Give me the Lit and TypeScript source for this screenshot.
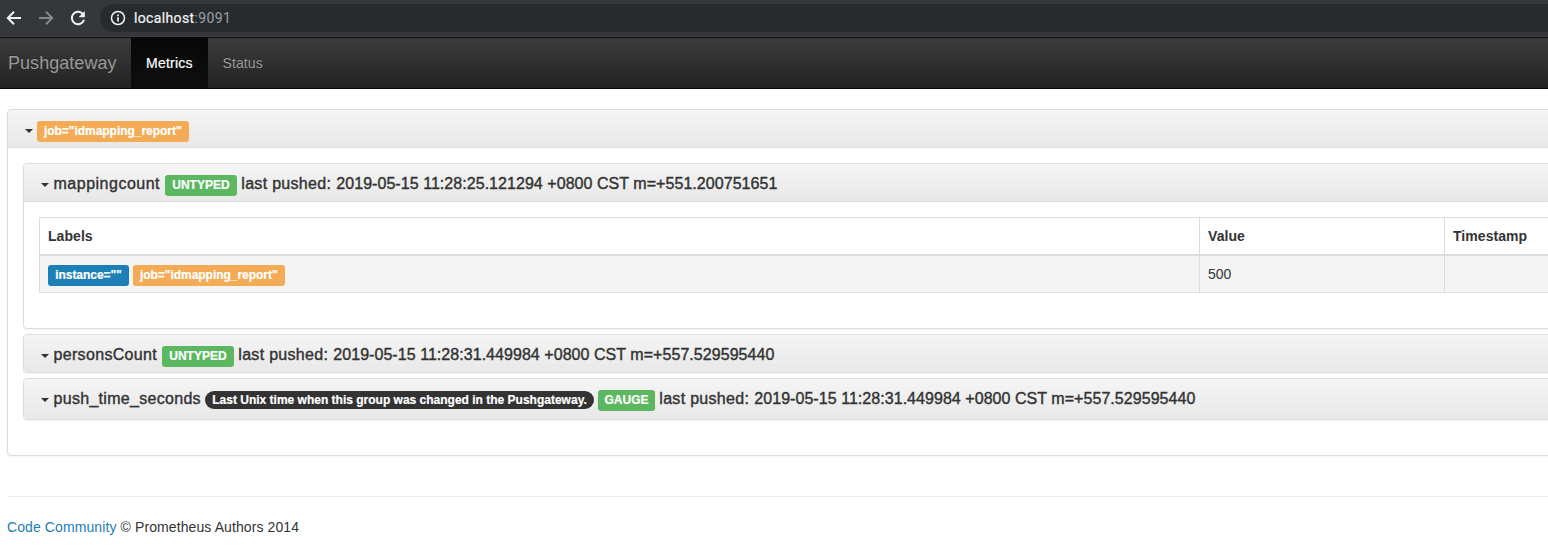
import { LitElement, html, css, nothing } from "lit";
import { customElement, property } from "lit/decorators.js";

@customElement("browser-bar")
class BrowserBar extends LitElement {
  static styles = css`
    :host { display: flex; height: 37px; box-sizing: border-box; background: #35373a; border-bottom: 1px solid #3f4144; padding-top: 4px; }
    .icons { display: flex; flex: none; width: 100px; height: 28px; padding-left: 6px; box-sizing: border-box; align-items: center; gap: 16px; }
    svg { display: block; flex: none; fill: none; stroke: #f1f3f4; stroke-width: 2; }
    .dim { stroke: #85878a; }
    .address { flex: 1; display: flex; align-items: center; height: 28px; box-sizing: border-box; padding-left: 10px; border-radius: 14px 0 0 14px; background: #282b2e; color: #f1f3f4; font: 14px/28px Roboto, sans-serif; letter-spacing: 0.36px; }
    .info { stroke-width: 1.5; margin-right: 8px; }
    .host { -webkit-text-stroke: 0.2px; }
    .port { color: #9aa0a6; }
  `;
  render() {
    return html`
      <div class="icons">
        <svg width="16" height="16" viewBox="0 0 16 16"><path d="M15 8H2.5M8 1.8 1.8 8 8 14.2" /></svg>
        <svg class="dim" width="16" height="16" viewBox="0 0 16 16"><path d="M1 8h12.5M8 1.8 14.2 8 8 14.2" /></svg>
        <svg width="16" height="16" viewBox="0 0 16 16"><path d="M13.3 4.6A6.2 6.2 0 1 0 14 9.8" /><path d="M14.8 1v6.2H8.6z" fill="#f1f3f4" stroke="none" /></svg>
      </div>
      <div class="address">
        <svg class="info" width="16" height="16" viewBox="0 0 16 16"><circle cx="8" cy="8" r="6.5" /><path d="M8 7.2v4.3M8 4.5v1.7" stroke-width="1.7" /></svg>
        <span class="host">localhost</span><span class="port">:9091</span>
      </div>
    `;
  }
}

@customElement("nav-bar")
class NavBar extends LitElement {
  static styles = css`
    :host { display: flex; height: 52px; box-sizing: border-box; border-top: 1px solid #0c0c0c; border-bottom: 1px solid #080808; background: linear-gradient(#3c3c3c, #222); font: 14px/50px "Liberation Sans", Arial, sans-serif; color: #999; text-shadow: 0 -1px 0 rgba(0, 0, 0, 0.25); }
    .brand { width: 123px; padding-left: 8px; font-size: 18px; letter-spacing: 0.04px; }
    .tab { padding: 0 15px; }
    .metrics { width: 47px; background: linear-gradient(#080808, #0f0f0f); color: #fff; box-shadow: inset 0 3px 9px rgba(0, 0, 0, 0.25); letter-spacing: 0.25px; white-space: nowrap; -webkit-text-stroke: 0.2px; }
    .status { padding-left: 14.5px; letter-spacing: 0.1px; }
  `;
  render() {
    return html`<div class="brand">Pushgateway</div>
      <div class="tab metrics">Metrics</div>
      <div class="tab status">Status</div>`;
  }
}

@customElement("label-badge")
class LabelBadge extends LitElement {
  @property({ reflect: true }) kind = "job";
  static styles = css`
    :host { display: block; flex: none; box-sizing: border-box; height: 21px; border-radius: 3px; color: #fff; font: bold 12px/20px "Liberation Sans", Arial, sans-serif; text-align: center; white-space: nowrap; -webkit-text-stroke: 0.2px; }
    :host([kind="job"]) { width: 151.5px; background: #f4ab55; letter-spacing: -0.03px; }
    :host([kind="instance"]) { width: 81px; background: #1c7fb6; letter-spacing: -0.05px; }
    :host([kind="untyped"]) { width: 72px; background: #5cb860; letter-spacing: 0.03px; }
    :host([kind="gauge"]) { width: 57px; background: #5cb860; }
    :host([kind="help"]) { width: 389px; height: 18px; line-height: 18px; border-radius: 9px; background: #333; }
  `;
  render() {
    return html`<slot></slot>`;
  }
}

@customElement("metric-heading")
class MetricHeading extends LitElement {
  @property() name = "";
  @property() help = "";
  @property() type = "";
  @property() pushed = "";
  static styles = css`
    :host { display: flex; align-items: flex-start; padding: 11px 0 0 17px; font: 16px/18px "Liberation Sans", Arial, sans-serif; color: #333; white-space: nowrap; -webkit-text-stroke: 0.4px #333; }
    label-badge { -webkit-text-stroke: 0.2px #fff; }
    .caret { width: 8px; height: 4px; margin: 8px 4.5px 0 0; background: #333; clip-path: polygon(0 0, 100% 0, 50% 100%); }
    .mappingcount { width: 111.5px; letter-spacing: 0.5px; }
    .personsCount { width: 108.5px; letter-spacing: 0.33px; }
    .push_time_seconds { width: 151.5px; letter-spacing: 0.3px; }
    .pushed { width: 95px; margin-left: 4.3px; letter-spacing: 0.3px; }
    .date { letter-spacing: 0.05px; }
    .help { margin: 1px 4px 0 0; }
  `;
  render() {
    return html`
      <span class="caret"></span>
      <span class="name ${this.name}">${this.name}</span>
      ${this.help ? html`<label-badge class="help" kind="help">${this.help}</label-badge>` : nothing}
      <label-badge kind=${this.type.toLowerCase()}>${this.type}</label-badge>
      <span class="pushed">last pushed: </span><span class="date">${this.pushed}</span>
    `;
  }
}

@customElement("app-root")
class AppRoot extends LitElement {
  static styles = css`
    :host { display: block; height: 546px; overflow: hidden; background: #fff; font: 14px/20px "Liberation Sans", Arial, sans-serif; color: #333; }
    main { margin: 20px 0 0 7px; width: 1560px; }
    .panel { box-sizing: border-box; border: 1px solid #ddd; border-radius: 4px; box-shadow: 0 1px 2px rgba(0, 0, 0, 0.05); background: #fff; }
    .heading { box-sizing: border-box; background: linear-gradient(#f5f5f5, #e8e8e8); border-radius: 3px 3px 0 0; }
    .group { height: 347px; }
    .top { display: flex; height: 38px; padding: 11px 0 0 17px; border-bottom: 1px solid #ddd; }
    .caret { width: 8px; height: 4px; margin: 8px 4px 0 0; background: #333; clip-path: polygon(0 0, 100% 0, 50% 100%); }
    .body { padding: 15px 0 0 15px; display: flex; flex-direction: column; gap: 5px; }
    .open { height: 166px; }
    .inner { height: 38px; border-bottom: 1px solid #ddd; }
    .closed { height: 39px; }
    .closed .heading { height: 37px; border-radius: 3px; }
    .tall { height: 42px; }
    .tall .heading { height: 40px; }
    .table { display: grid; grid-template-columns: 1160px 245px 150px; margin: 15px 0 0 15px; width: 1555px; border-top: 1px solid #ddd; }
    .cell { box-sizing: border-box; border-left: 1px solid #ddd; padding: 8px 0 0 8px; }
    .head { height: 38px; border-bottom: 2px solid #ddd; font-weight: bold; letter-spacing: 0.06px; }
    .row { height: 37px; border-bottom: 1px solid #ddd; background: #f4f4f4; }
    .labels { display: flex; gap: 4px; padding-top: 9px; }
    hr { border: 0; border-top: 1px solid #eee; margin: 40px 0 20px; }
    footer { letter-spacing: 0.1px; }
    a { color: #1a7eb5; text-decoration: none; }
  `;
  render() {
    return html`
      <browser-bar></browser-bar>
      <nav-bar></nav-bar>
      <main>
        <section class="panel group">
          <div class="heading top"><span class="caret"></span><label-badge kind="job">job="idmapping_report"</label-badge></div>
          <div class="body">
            <section class="panel open">
              <div class="heading inner">
                <metric-heading name="mappingcount" type="UNTYPED" pushed="2019-05-15 11:28:25.121294 +0800 CST m=+551.200751651"></metric-heading>
              </div>
              <div class="table">
                <div class="cell head">Labels</div>
                <div class="cell head">Value</div>
                <div class="cell head">Timestamp</div>
                <div class="cell row labels"><label-badge kind="instance">instance=""</label-badge><label-badge kind="job">job="idmapping_report"</label-badge></div>
                <div class="cell row">500</div>
                <div class="cell row"></div>
              </div>
            </section>
            <section class="panel closed">
              <div class="heading">
                <metric-heading name="personsCount" type="UNTYPED" pushed="2019-05-15 11:28:31.449984 +0800 CST m=+557.529595440"></metric-heading>
              </div>
            </section>
            <section class="panel closed tall">
              <div class="heading">
                <metric-heading name="push_time_seconds" help="Last Unix time when this group was changed in the Pushgateway." type="GAUGE" pushed="2019-05-15 11:28:31.449984 +0800 CST m=+557.529595440"></metric-heading>
              </div>
            </section>
          </div>
        </section>
        <hr />
        <footer><a>Code Community</a> © Prometheus Authors 2014</footer>
      </main>
    `;
  }
}
